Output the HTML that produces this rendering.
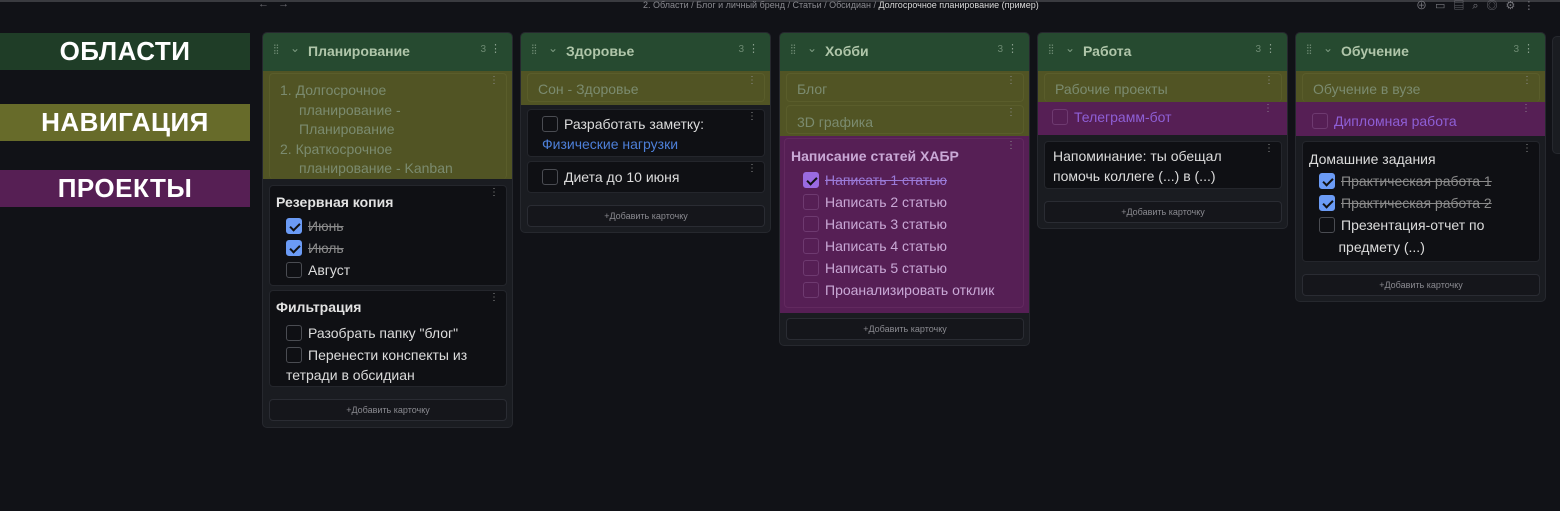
<!DOCTYPE html>
<html><head><meta charset="utf-8"><style>
*{box-sizing:border-box;margin:0;padding:0}
body{width:1560px;height:511px;background:#111217;font-family:"Liberation Sans","Noto Sans CJK SC",sans-serif;position:relative;overflow:hidden;color:#dcdcdc}
.a{position:absolute}
.topline{left:0;top:0;width:1560px;height:2px;background:#3a3b40}
.bc{top:0;left:643px;font-size:9px;color:#8a8a90;white-space:nowrap}
.bc b{color:#d8d8d8;font-weight:normal}
.lab{left:0;width:250px;height:37px;color:#fff;font-weight:bold;font-size:26px;text-align:center;line-height:37px;letter-spacing:0.5px}
.col{width:251px;background:#1a1c21;border:1px solid #26282e;border-radius:5px}
.hdr{left:0;top:0;width:100%;height:38px;background:#264a30;border-radius:4px 4px 0 0}
.hdr .t{position:absolute;left:45px;top:10px;font-size:14px;font-weight:bold;color:#b0c6aa}
.hdr .g{position:absolute;left:10px;top:9px;font-size:13px;color:#6d8a72;letter-spacing:-1px}
.hdr .c{position:absolute;left:27px;top:8px;font-size:12px;color:#7c9a80}
.hdr .n{position:absolute;right:26px;top:11px;font-size:10px;color:#6d8a72}
.hdr .m{position:absolute;right:11px;top:9px;font-size:11px;color:#8aa08e}
.card{position:absolute;left:6px;width:238px;background:#0f1014;border:1px solid #24262c;border-radius:4px;font-size:14px;line-height:20px;padding:6px}
.dots{position:absolute;right:7px;top:3px;font-size:10px;color:#8a8a8a;line-height:8px}
.y{background:#515424}
.yc{position:absolute;left:6px;width:238px;border:1px solid #5a5d2b;border-radius:4px;color:#7b8b6f;font-size:14px;padding:6px 10px;height:29px;line-height:16px}
.p{background:#561f55}
.cb{display:inline-block;width:16px;height:16px;border:1px solid #4a4c52;border-radius:3px;vertical-align:-3px;margin-right:6px;position:relative}
.cb.on{background:#6b9bf5;border-color:#6b9bf5}
.cb.on:after{content:"";position:absolute;left:5px;top:2px;width:4px;height:8px;border:solid #111;border-width:0 2px 2px 0;transform:rotate(45deg)}
.cb.pu{background:#9a6ae0;border-color:#9a6ae0}
.s{text-decoration:line-through;color:#8a8a8a}
.add{position:absolute;left:6px;width:238px;height:22px;border:1px solid #2a2c33;border-radius:4px;background:#15161b;font-size:9px;color:#8a8a90;text-align:center;line-height:20px}
.row{padding-left:10px;height:22px}
.tt{font-weight:bold;color:#e2e2e2;margin-bottom:4px}
</style></head><body>
<div class="a topline"></div>
<div class="a" style="left:258px;top:-2px;font-size:11px;color:#6a6a70">←&nbsp;&nbsp;&nbsp;→</div>
<div class="a bc">2. Области / Блог и личный бренд / Статьи / Обсидиан / <b>Долгосрочное планирование (пример)</b></div>
<div class="a" style="left:1416px;top:-3px;font-size:11px;color:#7a7a80;letter-spacing:8px">⊕▭▤⌕◎⚙⋮</div>

<div class="a lab" style="top:33px;background:#1f3d27">ОБЛАСТИ</div>
<div class="a lab" style="top:104px;background:#676b2a">НАВИГАЦИЯ</div>
<div class="a lab" style="top:170px;background:#561f54">ПРОЕКТЫ</div>

<!-- col1 -->
<div class="a col" style="left:262px;top:32px;height:396px">
<div class="a hdr"><span class="g">⁞⁞</span><span class="c">⌄</span><span class="t">Планирование</span><span class="n">3</span><span class="m">⋮</span></div>
<div class="a y" style="left:0;top:38px;width:249px;height:108px"></div>
<div class="a" style="left:6px;top:40px;width:238px;height:106px;border:1px solid #5a5d2b;border-bottom:none;border-radius:4px;color:#7b8b6f;font-size:14px;line-height:19.5px;padding:7px 0 0 10px">
<div class="dots">⋮</div>
<div>1. Долгосрочное</div><div style="padding-left:19px">планирование -<br>Планирование</div>
<div>2. Краткосрочное</div><div style="padding-left:19px">планирование - Kanban</div></div>
<div class="card" style="top:152px;height:101px"><div class="dots">⋮</div><div class="tt">Резервная копия</div>
<div class="row"><span class="cb on"></span><span class="s">Июнь</span></div>
<div class="row"><span class="cb on"></span><span class="s">Июль</span></div>
<div class="row"><span class="cb"></span>Август</div></div>
<div class="card" style="top:257px;height:97px"><div class="dots">⋮</div><div class="tt">Фильтрация</div>
<div class="row" style="margin-top:6px"><span class="cb"></span>Разобрать папку "блог"</div>
<div class="row" style="height:auto"><span class="cb"></span>Перенести конспекты из<br>тетради в обсидиан</div></div>
<div class="add" style="top:366px">+Добавить карточку</div>
</div>

<!-- col2 -->
<div class="a col" style="left:520px;top:32px;height:201px">
<div class="a hdr"><span class="g">⁞⁞</span><span class="c">⌄</span><span class="t">Здоровье</span><span class="n">3</span><span class="m">⋮</span></div>
<div class="a y" style="left:0;top:38px;width:249px;height:34px"></div>
<div class="yc" style="top:40px;padding-top:7px"><div class="dots">⋮</div>Сон - Здоровье</div>
<div class="card" style="top:76px;height:48px;padding:4px 14px"><div class="dots">⋮</div><span class="cb"></span>Разработать заметку:<br><span style="color:#4d7fd8">Физические нагрузки</span></div>
<div class="card" style="top:128px;height:32px;padding:5px 14px"><div class="dots">⋮</div><span class="cb"></span>Диета до 10 июня</div>
<div class="add" style="top:172px">+Добавить карточку</div>
</div>

<!-- col3 -->
<div class="a col" style="left:779px;top:32px;height:314px">
<div class="a hdr"><span class="g">⁞⁞</span><span class="c">⌄</span><span class="t">Хобби</span><span class="n">3</span><span class="m">⋮</span></div>
<div class="a y" style="left:0;top:38px;width:249px;height:65px"></div>
<div class="yc" style="top:40px;padding-top:7px"><div class="dots">⋮</div>Блог</div>
<div class="yc" style="top:72px;padding-top:8px"><div class="dots">⋮</div>3D графика</div>
<div class="a p" style="left:0;top:103px;width:249px;height:177px"></div>
<div class="a" style="left:4px;top:105px;width:240px;height:170px;border:1px solid #62295f;border-radius:4px;padding:6px 6px;font-size:14px;line-height:22px;color:#c9a9d6">
<div class="dots">⋮</div><div style="font-weight:bold;margin-bottom:2px">Написание статей ХАБР</div>
<div style="padding-left:12px"><span class="cb pu on"></span><span style="text-decoration:line-through;color:#9a7ad8">Написать 1 статью</span></div>
<div style="padding-left:12px"><span class="cb" style="border-color:#6e3a70"></span>Написать 2 статью</div>
<div style="padding-left:12px"><span class="cb" style="border-color:#6e3a70"></span>Написать 3 статью</div>
<div style="padding-left:12px"><span class="cb" style="border-color:#6e3a70"></span>Написать 4 статью</div>
<div style="padding-left:12px"><span class="cb" style="border-color:#6e3a70"></span>Написать 5 статью</div>
<div style="padding-left:12px"><span class="cb" style="border-color:#6e3a70"></span>Проанализировать отклик</div></div>
<div class="add" style="top:285px">+Добавить карточку</div>
</div>

<!-- col4 -->
<div class="a col" style="left:1037px;top:32px;height:197px">
<div class="a hdr"><span class="g">⁞⁞</span><span class="c">⌄</span><span class="t">Работа</span><span class="n">3</span><span class="m">⋮</span></div>
<div class="a y" style="left:0;top:38px;width:249px;height:31px"></div>
<div class="yc" style="top:40px;padding-top:7px;border-bottom:none"><div class="dots">⋮</div>Рабочие проекты</div>
<div class="a p" style="left:0;top:69px;width:249px;height:33px"></div>
<div class="a" style="left:10px;top:76px;font-size:14px;color:#8e5fd6;padding-left:4px"><span class="cb" style="border-color:#6e3a70"></span>Телеграмм-бот</div>
<div class="a" style="right:14px;top:70px;font-size:10px;color:#8a7a8a">⋮</div>
<div class="card" style="top:108px;height:48px;padding:4px 8px"><div class="dots">⋮</div>Напоминание: ты обещал<br>помочь коллеге (...) в (...)</div>
<div class="add" style="top:168px">+Добавить карточку</div>
</div>

<!-- col5 -->
<div class="a col" style="left:1295px;top:32px;height:270px">
<div class="a hdr"><span class="g">⁞⁞</span><span class="c">⌄</span><span class="t">Обучение</span><span class="n">3</span><span class="m">⋮</span></div>
<div class="a y" style="left:0;top:38px;width:249px;height:31px"></div>
<div class="yc" style="top:40px;padding-top:7px;border-bottom:none"><div class="dots">⋮</div>Обучение в вузе</div>
<div class="a p" style="left:0;top:69px;width:249px;height:34px"></div>
<div class="a" style="left:16px;top:80px;font-size:14px;color:#8e5fd6"><span class="cb" style="border-color:#6e3a70"></span>Дипломная работа</div>
<div class="a" style="right:14px;top:70px;font-size:10px;color:#8a7a8a">⋮</div>
<div class="card" style="top:108px;height:121px;padding:6px 6px;line-height:22px"><div class="dots">⋮</div><div>Домашние задания</div>
<div class="row"><span class="cb on"></span><span class="s">Практическая работа 1</span></div>
<div class="row"><span class="cb on"></span><span class="s">Практическая работа 2</span></div>
<div class="row" style="height:auto"><span class="cb"></span>Презентация-отчет по<br>&nbsp;&nbsp;&nbsp;&nbsp;&nbsp;предмету (...)</div></div>
<div class="add" style="top:241px">+Добавить карточку</div>
</div>

<div class="a col" style="left:1552px;top:36px;height:118px;width:20px"></div>
</body></html>
